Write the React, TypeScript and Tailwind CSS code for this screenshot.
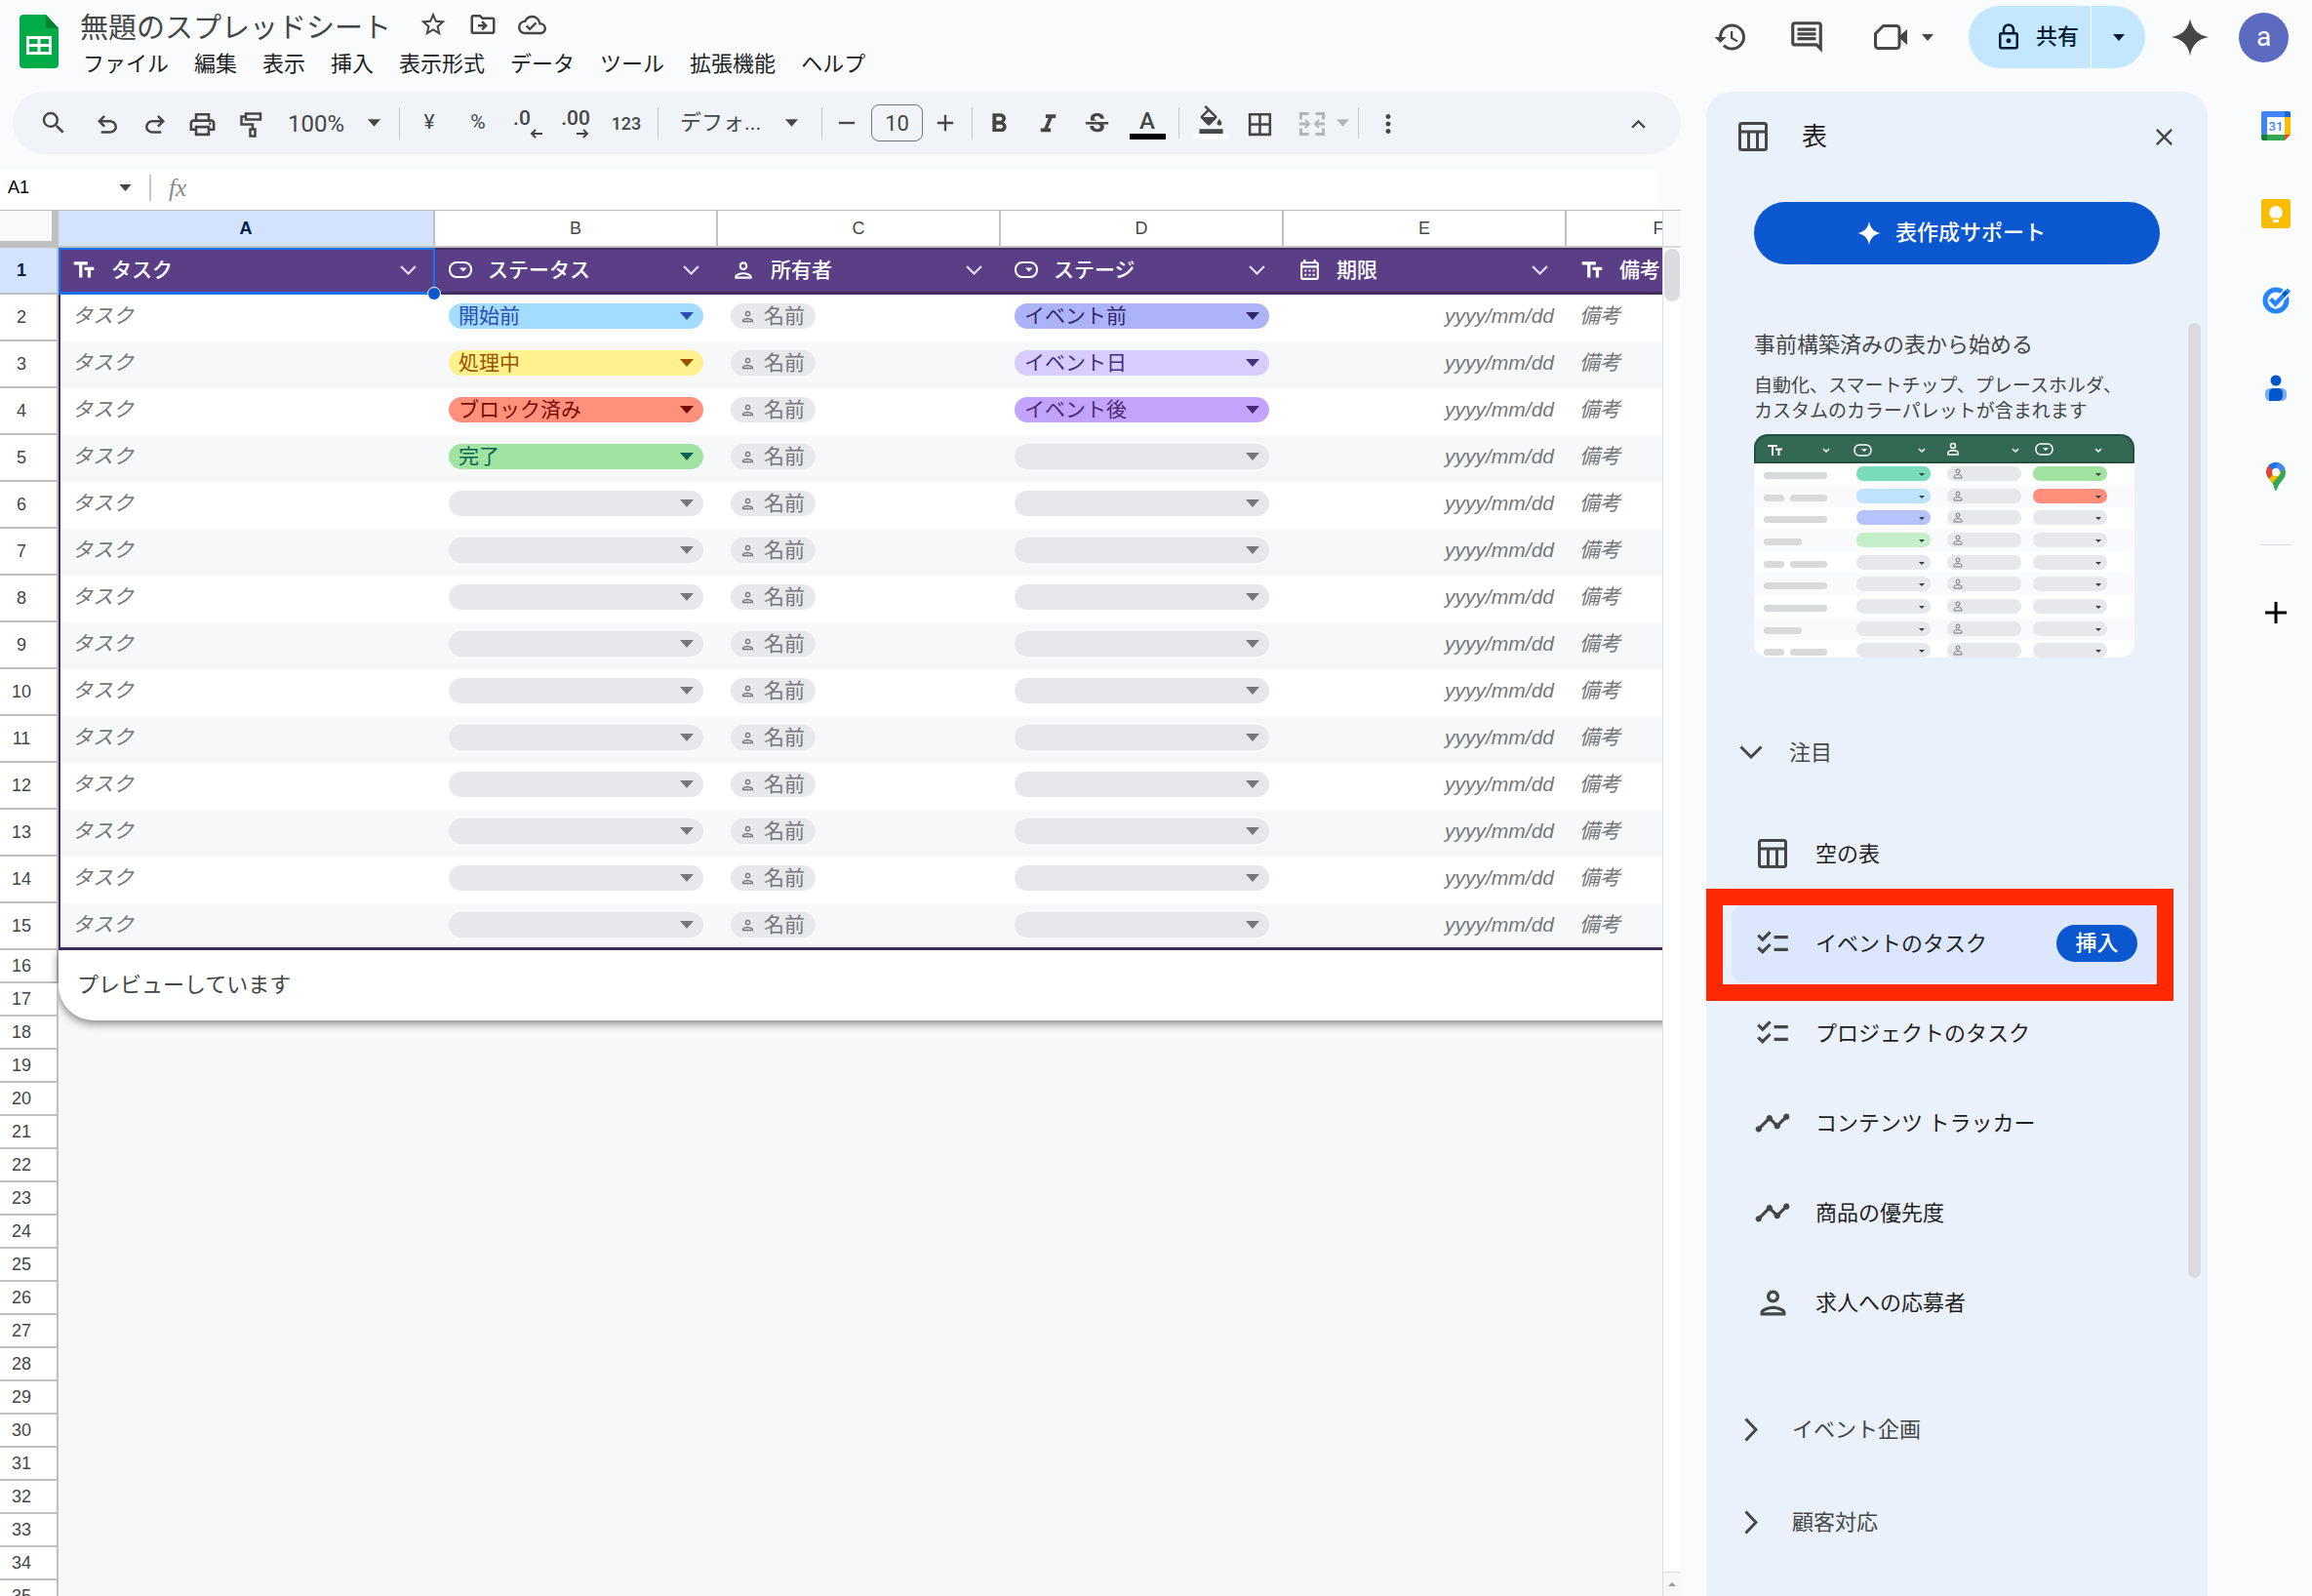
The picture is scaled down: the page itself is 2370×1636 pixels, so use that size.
import React from 'react';
import {
  MdAdd,
  MdBorderAll,
  MdChecklist,
  MdClose,
  MdExpandLess,
  MdFormatBold,
  MdFormatColorFill,
  MdFormatItalic,
  MdHistory,
  MdMoreVert,
  MdOutlineCalendarMonth,
  MdOutlineCloudDone,
  MdOutlineDriveFileMove,
  MdOutlineInsertComment,
  MdOutlineLock,
  MdOutlinePerson,
  MdOutlinePrint,
  MdRemove,
  MdSearch,
  MdStarBorder,
  MdStrikethroughS,
  MdTextFields,
  MdTimeline,
} from 'react-icons/md';

const MENUS = ['ファイル', '編集', '表示', '挿入', '表示形式', 'データ', 'ツール', '拡張機能', 'ヘルプ'];

const COLUMNS = [
  { letter: 'A', label: 'タスク', icon: 'text' },
  { letter: 'B', label: 'ステータス', icon: 'chip' },
  { letter: 'C', label: '所有者', icon: 'person' },
  { letter: 'D', label: 'ステージ', icon: 'chip' },
  { letter: 'E', label: '期限', icon: 'date' },
  { letter: 'F', label: '備考', icon: 'text' },
];

type ChipData = { label: string; tone: string };

const EMPTY_CHIP: ChipData = { label: '', tone: 'bg-[#e7e8eb] text-[#75777a]' };

const STATUS: ChipData[] = [
  { label: '開始前', tone: 'bg-[#a4dcff] text-[#2a4db0]' },
  { label: '処理中', tone: 'bg-[#fff18e] text-[#9a5400]' },
  { label: 'ブロック済み', tone: 'bg-[#ff917c] text-[#760b06]' },
  { label: '完了', tone: 'bg-[#a1e3a0] text-[#0f6350]' },
];

const STAGE: ChipData[] = [
  { label: 'イベント前', tone: 'bg-[#adb3f9] text-[#33286b]' },
  { label: 'イベント日', tone: 'bg-[#d9cdff] text-[#43307a]' },
  { label: 'イベント後', tone: 'bg-[#c3a4fc] text-[#4a2a72]' },
];

const BODY_ROWS = Array.from({ length: 14 }, (_, i) => i + 2);
const REST_ROWS = Array.from({ length: 20 }, (_, i) => i + 16);

const TEMPLATES = [
  { label: '空の表', icon: 'table' },
  { label: 'イベントのタスク', icon: 'check', active: true },
  { label: 'プロジェクトのタスク', icon: 'check' },
  { label: 'コンテンツ トラッカー', icon: 'line' },
  { label: '商品の優先度', icon: 'line' },
  { label: '求人への応募者', icon: 'person' },
];

function Caret({ className = '' }: { className?: string }) {
  return (
    <svg viewBox="0 0 14 8" className={`shrink-0 ${className}`} fill="currentColor" aria-hidden="true">
      <path d="M0 0h14L7 8z" />
    </svg>
  );
}

function Chevron({ className = '' }: { className?: string }) {
  return (
    <svg viewBox="0 0 24 14" className={className} fill="none" stroke="currentColor" strokeWidth="3" aria-hidden="true">
      <path d="M1.500 1.500 12 12 22.500 1.500" />
    </svg>
  );
}

function ChevronRight() {
  return (
    <svg viewBox="0 0 14 25" className="h-[25px] w-[14px]" fill="none" stroke="currentColor" strokeWidth="3" aria-hidden="true">
      <path d="M1.500 1.500 12 12.500 1.500 23.500" />
    </svg>
  );
}

function Sparkle({ className = '' }: { className?: string }) {
  return (
    <svg viewBox="0 0 38 38" className={className} fill="currentColor" aria-hidden="true">
      <path d="M19 0c2 11 8 17 19 19-11 2-17 8-19 19-2-11-8-17-19-19C11 17 17 11 19 0z" />
    </svg>
  );
}

function TableIcon() {
  return (
    <svg viewBox="0 0 30 30" className="h-[30px] w-[30px]" fill="none" stroke="currentColor" strokeWidth="3" aria-hidden="true">
      <rect x="1.500" y="1.500" width="27" height="27" rx="2" />
      <path d="M1.500 10h27M10.500 10v18.500M19.500 10v18.500" />
    </svg>
  );
}

function ChipIcon({ className = '' }: { className?: string }) {
  return (
    <svg viewBox="0 0 24 17" className={className} fill="none" aria-hidden="true">
      <rect x="1" y="1" width="22" height="15" rx="7" stroke="currentColor" strokeWidth="2" />
      <path d="M11 6.500h7.500L14.800 10.500z" fill="currentColor" />
    </svg>
  );
}

function ColumnIcon({ icon }: { icon: string }) {
  if (icon === 'text') return <MdTextFields className="h-[26px] w-[26px]" />;
  if (icon === 'chip') return <ChipIcon className="h-[17px] w-[24px]" />;
  if (icon === 'person') return <MdOutlinePerson className="h-[26px] w-[26px]" />;
  return <MdOutlineCalendarMonth className="h-[25px] w-[25px]" />;
}

function Header() {
  return (
    <header className="flex h-[94px] shrink-0 justify-between pl-5">
      <div className="flex">
        <svg viewBox="0 0 40 55" className="mt-[15px] h-[55px] w-[40px]" aria-hidden="true">
          <path d="M4 0h23l13 14v37a4 4 0 0 1-4 4H4a4 4 0 0 1-4-4V4a4 4 0 0 1 4-4z" fill="#00ac47" />
          <path d="M27 0l13 14H27z" fill="#00832d" />
          <path d="M7 22h26v19H7zM10 25v5h8.500v-5zM21.500 25v5H30v-5zM10 33v5h8.500v-5zM21.500 33v5H30v-5z" fill="#fff" fillRule="evenodd" />
        </svg>
        <div className="ml-[22px] pt-2">
          <div className="flex h-[34px] items-center text-[#444746]">
            <input
              aria-label="名前の変更"
              defaultValue="無題のスプレッドシート"
              className="h-[34px] w-[336px] bg-transparent pt-[2px] text-[29px] leading-[32px] text-[#444746]"
            />
            <button aria-label="スター" className="flex w-[51px] justify-center">
              <MdStarBorder className="h-[30px] w-[30px]" />
            </button>
            <button aria-label="移動" className="flex w-[51px] justify-center">
              <MdOutlineDriveFileMove className="h-[30px] w-[30px]" />
            </button>
            <button aria-label="ドキュメントのステータス" className="flex w-[51px] justify-center">
              <MdOutlineCloudDone className="h-[29px] w-[29px]" />
            </button>
          </div>
          <nav className="mt-[9px] flex h-[30px] items-center gap-[26px] pl-[3px] text-[22px] leading-[30px] text-[#1f1f1f]">
            {MENUS.map((menu) => (
              <button key={menu} className="whitespace-nowrap">
                {menu}
              </button>
            ))}
          </nav>
        </div>
      </div>

      <div className="flex h-[76px] items-center pr-6 text-[#444746]">
        <button aria-label="変更履歴">
          <MdHistory className="h-[36px] w-[36px]" />
        </button>
        <button aria-label="コメント" className="ml-[41px]">
          <MdOutlineInsertComment className="h-[38px] w-[38px]" />
        </button>
        <button aria-label="ビデオ通話" className="ml-[50px] flex items-center gap-[15px]">
          <svg viewBox="0 0 34 26" className="h-[26px] w-[34px]" aria-hidden="true">
            <path d="M9.500 1.500H23a3 3 0 0 1 3 3v17a3 3 0 0 1-3 3H4.500a3 3 0 0 1-3-3v-12z" fill="none" stroke="currentColor" strokeWidth="3" strokeLinejoin="round" />
            <path d="M26 12l8-7v16l-8-7z" fill="currentColor" />
          </svg>
          <Caret className="h-[7px] w-[12px]" />
        </button>
        <div className="ml-[36px] flex h-16 overflow-hidden rounded-full bg-[#c2e7ff] text-[#001d35]">
          <button className="flex w-[126px] items-center gap-[13px] border-r border-white pl-[26px] text-[22px] leading-[30px] font-medium">
            <MdOutlineLock className="h-[30px] w-[30px]" />
            共有
          </button>
          <button aria-label="共有オプション" className="flex w-[55px] items-center justify-center">
            <Caret className="h-[7px] w-[12px]" />
          </button>
        </div>
        <button aria-label="Gemini" className="ml-[27px]">
          <Sparkle className="h-[38px] w-[38px]" />
        </button>
        <button className="ml-[31px] flex h-[51px] w-[51px] items-center justify-center rounded-full bg-[#5c6bc0] text-[28px] leading-[30px] text-white">
          a
        </button>
      </div>
    </header>
  );
}

function ToolButton({ label, className = 'w-[50px]', children }: { label: string; className?: string; children: React.ReactNode }) {
  return (
    <button aria-label={label} className={`flex h-12 shrink-0 items-center justify-center ${className}`}>
      {children}
    </button>
  );
}

function Divider({ className = '' }: { className?: string }) {
  return <span className={`h-8 w-px shrink-0 bg-[#c7c7c7] ${className}`} />;
}

function Toolbar() {
  return (
    <div className="ml-[13px] flex h-16 shrink-0 items-center rounded-full bg-[#f0f4f9] pr-[19px] pl-[18px] text-[#444746]">
      <ToolButton label="検索" className="w-[48px]">
        <MdSearch className="h-[30px] w-[30px]" />
      </ToolButton>
      <ToolButton label="元に戻す" className="ml-[6px] w-[49px] pt-[3px]">
        <svg viewBox="0 -960 960 960" className="h-[30px] w-[30px]" fill="currentColor" aria-hidden="true">
          <path d="M280-200v-80h284q63 0 109.500-40T720-420q0-60-46.500-100T564-560H312l104 104-56 56-200-200 200-200 56 56-104 104h252q97 0 166.500 63T800-420q0 94-69.500 157T564-200H280Z" />
        </svg>
      </ToolButton>
      <ToolButton label="やり直し" className="w-[49px] pt-[3px]">
        <svg viewBox="0 -960 960 960" className="h-[30px] w-[30px]" fill="currentColor" aria-hidden="true">
          <path d="M396-200q-97 0-166.500-63T160-420q0-94 69.500-157T396-640h252L544-744l56-56 200 200-200 200-56-56 104-104H396q-63 0-109.500 40T240-420q0 60 46.500 100T396-280h284v80H396Z" />
        </svg>
      </ToolButton>
      <ToolButton label="印刷" className="w-[49px] pt-[3px]">
        <MdOutlinePrint className="h-[31px] w-[31px]" />
      </ToolButton>
      <ToolButton label="書式を貼り付け" className="w-[49px] pt-[3px]">
        <svg viewBox="0 0 24 28" className="h-[28px] w-[24px]" fill="none" stroke="currentColor" strokeWidth="2.500" aria-hidden="true">
          <path d="M7 2.500h15v6H7zM7 5.500H2.500v8H14v5M11.500 18.500h5v7h-5z" />
        </svg>
      </ToolButton>
      <label className="relative ml-[14px] flex w-[102px] shrink-0 items-center">
        <select aria-label="ズーム" className="w-full appearance-none bg-transparent pt-[2px] text-[24px] leading-[30px]">
          <option>100%</option>
        </select>
        <Caret className="absolute right-[7px] h-[8px] w-[13px]" />
      </label>
      <Divider className="ml-[12px]" />
      <ToolButton label="通貨の表示形式" className="ml-[5px] w-[50px] text-[21px]">¥</ToolButton>
      <ToolButton label="パーセント表示形式" className="w-[50px] text-[21px]">%</ToolButton>
      <ToolButton label="小数点以下の桁数を減らす" className="relative w-[50px] text-[21px] font-medium">
        <span className="pr-[10px] pb-[9px]">.0</span>
        <svg viewBox="0 0 13 10" className="absolute right-[9px] bottom-[8px] h-[10px] w-[13px]" fill="none" stroke="currentColor" strokeWidth="2" aria-hidden="true">
          <path d="M13 5H2M6 1 2 5l4 4" />
        </svg>
      </ToolButton>
      <ToolButton label="小数点以下の桁数を増やす" className="relative w-[50px] text-[21px] font-medium">
        <span className="pb-[9px]">.00</span>
        <svg viewBox="0 0 13 10" className="absolute right-[11px] bottom-[8px] h-[10px] w-[13px]" fill="none" stroke="currentColor" strokeWidth="2" aria-hidden="true">
          <path d="M0 5h11M7 1l4 4-4 4" />
        </svg>
      </ToolButton>
      <ToolButton label="表示形式の詳細設定" className="w-[54px] text-[18px] font-medium">123</ToolButton>
      <Divider className="ml-[5px]" />
      <label className="relative ml-[22px] flex w-[129px] shrink-0 items-center">
        <select aria-label="フォント" className="w-full appearance-none bg-transparent text-[22px] leading-[30px]">
          <option>デフォ...</option>
        </select>
        <Caret className="absolute right-[8px] h-[8px] w-[13px]" />
      </label>
      <Divider className="ml-[16px]" />
      <ToolButton label="フォントサイズを縮小">
        <MdRemove className="h-[28px] w-[28px]" />
      </ToolButton>
      <input
        aria-label="フォントサイズ"
        defaultValue="10"
        className="h-[38px] w-[53px] shrink-0 rounded-lg border border-[#747775] bg-transparent text-center text-[22px]"
      />
      <ToolButton label="フォントサイズを拡大" className="w-[46px]">
        <MdAdd className="h-[28px] w-[28px]" />
      </ToolButton>
      <Divider className="ml-[4px]" />
      <ToolButton label="太字" className="ml-[2px] w-[50px] pt-[2px]">
        <MdFormatBold className="h-[32px] w-[32px]" />
      </ToolButton>
      <ToolButton label="斜体" className="w-[50px] pt-[2px]">
        <MdFormatItalic className="h-[31px] w-[31px]" />
      </ToolButton>
      <ToolButton label="取り消し線" className="w-[50px] pt-[2px]">
        <MdStrikethroughS className="h-[31px] w-[31px]" />
      </ToolButton>
      <ToolButton label="テキストの色" className="w-[54px] flex-col pt-px">
        <span className="text-[24px] leading-[26px] font-medium">A</span>
        <span className="h-[6px] w-[37px] bg-black" />
      </ToolButton>
      <Divider className="ml-[5px]" />
      <ToolButton label="塗りつぶしの色" className="ml-[7px] w-[50px] flex-col pb-px">
        <MdFormatColorFill className="h-[29px] w-[29px]" />
        <span className="h-[6px] w-[37px] bg-white" />
      </ToolButton>
      <ToolButton label="枠線" className="w-[50px] pt-[2px]">
        <MdBorderAll className="h-[31px] w-[31px]" />
      </ToolButton>
      <ToolButton label="セルを結合" className="ml-[4px] w-[50px] pt-[2px] text-[#b3b6b9]">
        <svg viewBox="0 0 26 24" className="h-[24px] w-[26px]" fill="none" stroke="currentColor" strokeWidth="3" aria-hidden="true">
          <path d="M9.500 1.500h-8v6M1.500 16.500v6h8M16.500 1.500h8v6M24.500 16.500v6h-8M0 12h9M26 12h-9" />
          <path d="M6 8l4 4-4 4M20 8l-4 4 4 4" strokeWidth="2" />
        </svg>
      </ToolButton>
      <Caret className="h-[8px] w-[13px] text-[#b3b6b9]" />
      <Divider className="ml-[9px]" />
      <ToolButton label="その他" className="ml-[5px] w-[50px] pt-[2px]">
        <MdMoreVert className="h-[30px] w-[30px]" />
      </ToolButton>
      <ToolButton label="メニューを非表示" className="ml-auto w-[50px] pt-[2px]">
        <MdExpandLess className="h-[29px] w-[29px]" />
      </ToolButton>
    </div>
  );
}

function FormulaBar() {
  return (
    <div className="mt-[15px] mr-[25px] flex h-[42px] shrink-0 items-center bg-white pb-[3px] pl-[8px] text-[#444746]">
      <input aria-label="名前ボックス" defaultValue="A1" className="w-[114px] bg-transparent font-['Liberation_Sans',sans-serif] text-[18px] text-black" />
      <Caret className="h-[7px] w-[13px]" />
      <span className="ml-[18px] h-[27px] w-[2px] bg-[#c7c7c7]" />
      <span className="ml-[18px] font-['Liberation_Serif',serif] text-[25px] leading-[28px] text-[#85888b] italic">fx</span>
    </div>
  );
}

function SelectChip({ name, chip }: { name: string; chip: ChipData }) {
  return (
    <label className={`relative mr-[15px] ml-[14px] flex h-[26px] items-center rounded-full ${chip.tone}`}>
      <select aria-label={name} className="h-[26px] w-full appearance-none bg-transparent pl-[10px] text-[21px] leading-[26px]">
        <option>{chip.label}</option>
      </select>
      <Caret className="absolute right-[10px] h-[8px] w-[14px]" />
    </label>
  );
}

function Sheet() {
  return (
    <div className="flex min-h-0 flex-1 border-t border-[#c0c0c0] bg-[#f8f8f8]">
      <div className="min-w-0 flex-1 overflow-hidden">
        <table className="w-[1796px] table-fixed border-separate border-spacing-0 font-['Liberation_Sans','Noto_Sans_CJK_JP',sans-serif] text-[21px] leading-[26px] text-[#757779]">
          <colgroup>
            <col className="w-[60px]" />
            <col className="w-[386px]" />
            <col className="w-[290px]" />
            <col className="w-[290px]" />
            <col className="w-[290px]" />
            <col className="w-[290px]" />
            <col className="w-[190px]" />
          </colgroup>
          <thead>
            <tr className="h-[38px] text-[18px]">
              <td className="border-r-[7px] border-b-[7px] border-[#c0c0c0] bg-[#f8f9fa] p-0" />
              {COLUMNS.map(({ letter }) => (
                <th
                  key={letter}
                  className={
                    letter === 'A'
                      ? 'border-r-2 border-b-2 border-[#c0c0c0] bg-[#d3e3fd] p-0 font-bold text-[#041e49]'
                      : 'border-r-2 border-b-2 border-[#c0c0c0] bg-white p-0 font-normal text-[#444746]'
                  }
                >
                  {letter}
                </th>
              ))}
            </tr>
          </thead>
          <tbody>
            <tr className="h-12">
              <RowHeader n={1} />
              {COLUMNS.map(({ letter, label, icon }) => (
                <th key={letter} className="relative border-t-2 border-b-[3px] border-[#43305f] bg-[#5b3f86] p-0 pb-[2px] text-left font-medium text-white">
                  <div className="flex items-center pr-[19px] pl-[13px]">
                    <span className="flex w-[26px] justify-center">
                      <ColumnIcon icon={icon} />
                    </span>
                    <span className="ml-[15px] whitespace-nowrap">{label}</span>
                    {letter !== 'F' && (
                      <button aria-label={`${label}の列メニュー`} className="ml-auto">
                        <Chevron className="h-[10px] w-[17px] text-[#e9dcff]" />
                      </button>
                    )}
                  </div>
                  {letter === 'A' && (
                    <>
                      <span className="absolute inset-x-0 -top-[2px] -bottom-[3px] border-2 border-b-[3px] border-[#1a73e8]" />
                      <span className="absolute -right-[6px] -bottom-[9px] z-10 h-[14px] w-[14px] rounded-full border border-white bg-[#0b57d0]" />
                    </>
                  )}
                </th>
              ))}
            </tr>
            {BODY_ROWS.map((n) => (
              <BodyRow key={n} n={n} />
            ))}
            {REST_ROWS.map((n) => (
              <tr key={n} className="h-[34px]">
                <RowHeader n={n} />
                {n === 16 && (
                  <td colSpan={6} rowSpan={20} className="bg-[#f8f8f8] p-0 align-top">
                    <div className="flex h-[72px] items-center rounded-bl-[36px] bg-white pl-[19px] text-[22px] text-[#444746] shadow-[0_3px_10px_rgba(0,0,0,0.5)]">
                      プレビューしています
                    </div>
                  </td>
                )}
              </tr>
            ))}
          </tbody>
        </table>
      </div>
      <div className="flex w-[19px] shrink-0 flex-col border-l border-[#dcdcdc] bg-white">
        <div className="h-[38px] border-b-2 border-[#dcdcdc] bg-[#f8f9fa]" />
        <div className="mt-px ml-px h-[54px] w-4 rounded-full bg-[#dadce0]" />
        <button aria-label="上へスクロール" className="mt-auto flex h-[25px] items-center justify-center border-t border-[#dcdcdc] bg-[#f8f8f8]">
          <svg viewBox="0 0 8 4" className="h-[4px] w-[8px]" fill="#9a9a9a" aria-hidden="true">
            <path d="M0 4h8L4 0z" />
          </svg>
        </button>
      </div>
    </div>
  );
}

function RowHeader({ n }: { n: number }) {
  return (
    <th
      className={
        n === 1
          ? 'border-r-2 border-b-2 border-[#c0c0c0] bg-[#d3e3fd] p-0 pr-[14px] text-[18px] leading-[20px] font-bold text-[#041e49]'
          : 'border-r-2 border-b-2 border-[#c0c0c0] bg-white p-0 pr-[14px] text-[18px] leading-[20px] font-normal text-[#444746]'
      }
    >
      {n}
    </th>
  );
}

function BodyRow({ n }: { n: number }) {
  const last = n === 15;
  const cell = last ? 'border-b-[3px] border-[#43305f] p-0 pb-px' : 'p-0 pb-[4px]';
  return (
    <tr className={n % 2 ? 'h-12 bg-[#f6f8f9]' : 'h-12 bg-white'}>
      <RowHeader n={n} />
      <td className={`${cell} border-l-2 border-l-[#43305f]`}>
        <span className="pl-[12px] italic">タスク</span>
      </td>
      <td className={cell}>
        <SelectChip name="ステータス" chip={STATUS[n - 2] ?? EMPTY_CHIP} />
      </td>
      <td className={cell}>
        <span className="ml-[13px] flex h-[26px] w-[87px] items-center gap-[8px] rounded-full bg-[#e7e8eb] pl-[9px] whitespace-nowrap">
          <MdOutlinePerson className="h-[17px] w-[17px]" />
          名前
        </span>
      </td>
      <td className={cell}>
        <SelectChip name="ステージ" chip={STAGE[n - 2] ?? EMPTY_CHIP} />
      </td>
      <td className={`${cell} text-right italic`}>
        <span className="pr-[13px]">yyyy/mm/dd</span>
      </td>
      <td className={`${cell} italic`}>
        <span className="pl-[13px]">備考</span>
      </td>
    </tr>
  );
}

/* Illustration of a prebuilt table */
const ART_STATUS = ['#78dcba', '#bde3fd', '#b6c3fd', '#c4efca'];
const ART_STAGE = ['#a0e29f', '#ff8f7b'];
const ART_LINES = ['long', 'split', 'long', 'short', 'split', 'long', 'long', 'short', 'split'];

function TableArt() {
  return (
    <svg viewBox="0 0 390 229" className="mt-[10px] h-[229px] w-[390px] rounded-[14px]" aria-hidden="true">
      <rect width="390" height="229" fill="#fff" />
      <rect width="390" height="30" fill="#24503c" />
      <path d="M2 28V14A12 12 0 0 1 14 2h362a12 12 0 0 1 12 12v14z" fill="#336852" />
      <g fill="none" stroke="#fff" strokeWidth="1.500">
        <path d="M14 12h10M19 12v10M22 15.500h7M25.500 15.500v6.500" strokeWidth="2" />
        {[74, 172, 268, 353].map((x) => (
          <path key={x} d={`M${x - 3} 15l3 3 3-3`} />
        ))}
        <rect x="103" y="11" width="17" height="11" rx="5" />
        <rect x="289" y="10" width="17" height="11" rx="5" />
        <circle cx="204" cy="12" r="2.500" />
        <path d="M199 21v-2c0-3 10-3 10 0v2z" />
      </g>
      <path d="M110 15h6l-3 3zM296 14h6l-3 3z" fill="#fff" />
      {ART_LINES.map((kind, i) => {
        const y = Math.round(33 + i * 22.65);
        return (
          <g key={i}>
            {i % 2 === 1 && <rect x="0" y={y - 4} width="390" height="23" fill="#f9fafb" />}
            <g fill="#d9dadc">
              {kind === 'long' && <rect x="10" y={y + 6} width="65" height="7" rx="3" />}
              {kind === 'short' && <rect x="10" y={y + 6} width="39" height="7" rx="3" />}
              {kind === 'split' && <rect x="10" y={y + 6} width="21" height="7" rx="3" />}
              {kind === 'split' && <rect x="37" y={y + 6} width="38" height="7" rx="3" />}
            </g>
            <rect x="105" y={y} width="76" height="15" rx="7" fill={ART_STATUS[i] ?? '#e7e8eb'} />
            <rect x="198" y={y} width="76" height="15" rx="7" fill="#e7e8eb" />
            <rect x="286" y={y} width="76" height="15" rx="7" fill={ART_STAGE[i] ?? '#e7e8eb'} />
            <path d={`M169 ${y + 7}h6l-3 3zM350 ${y + 7}h6l-3 3z`} fill="#3c4043" />
            <g fill="none" stroke="#75777a">
              <circle cx="209" cy={y + 5} r="2" />
              <path d={`M205 ${y + 12}v-1.500c0-2.500 8-2.500 8 0v1.500z`} />
            </g>
          </g>
        );
      })}
    </svg>
  );
}

function TemplateIcon({ icon }: { icon: string }) {
  if (icon === 'table') return <TableIcon />;
  if (icon === 'check') return <MdChecklist className="h-[38px] w-[38px] shrink-0" />;
  if (icon === 'line') return <MdTimeline className="h-[38px] w-[38px] shrink-0" />;
  return <MdOutlinePerson className="h-[39px] w-[39px] shrink-0" />;
}

function SidePanel() {
  return (
    <aside className="ml-[26px] flex w-[514px] shrink-0 flex-col rounded-t-[26px] bg-[#ebf1fa] text-[22px] leading-[30px] text-[#444746]">
      <div className="flex h-[92px] shrink-0 items-center pr-[30px] pl-[33px]">
        <TableIcon />
        <h2 className="ml-[35px] text-[26px] text-[#1f1f1f]">表</h2>
        <button aria-label="閉じる" className="ml-auto pt-px">
          <MdClose className="h-[29px] w-[29px]" />
        </button>
      </div>
      <button className="mt-[21px] mr-[49px] ml-[49px] flex h-16 shrink-0 items-center justify-center gap-[15px] rounded-full bg-[#0b57d0] pr-[11px] font-medium text-white">
        <Sparkle className="h-[24px] w-[24px]" />
        表作成サポート
      </button>
      <div className="mt-[60px] flex min-h-0 flex-1">
        <div className="min-w-0 flex-1 overflow-hidden">
          <div className="pl-[49px]">
            <h3 className="pt-[2px] leading-[42px]">事前構築済みの表から始める</h3>
            <p className="mt-[8px] text-[19px] leading-[26px] whitespace-nowrap">
              自動化、スマートチップ、プレースホルダ、
              <br />
              カスタムのカラーパレットが含まれます
            </p>
            <TableArt />
          </div>
          <button className="mt-[73px] flex h-12 items-center gap-[23px] pl-[30px]">
            <span className="flex w-8 justify-center">
              <Chevron className="h-[14px] w-[24px]" />
            </span>
            <span className="pt-[2px]">注目</span>
          </button>
          <ul className="mt-[34px] text-[#1f1f1f]">
            {TEMPLATES.map(({ label, icon, active }) => (
              <li key={label} className="relative flex h-[92px] items-center pr-[28px] pl-[26px]">
                <div className={`flex h-[79px] flex-1 items-center rounded-xl pr-[24px] pl-[26px] ${active ? 'bg-[#dce7fd]' : ''}`}>
                  <span className="flex w-8 justify-center text-[#444746]">
                    <TemplateIcon icon={icon} />
                  </span>
                  <span className="ml-[28px] pt-px">{label}</span>
                  {active && (
                    <button className="ml-auto h-[38px] w-[83px] rounded-full bg-[#0b57d0] font-medium text-white">挿入</button>
                  )}
                </div>
                {active && (
                  <span className="pointer-events-none absolute -top-[10px] left-0 h-[115px] w-[479px] border-[17px] border-[#ff2900]" />
                )}
              </li>
            ))}
          </ul>
          <div className="mt-[37px]">
            {['イベント企画', '顧客対応'].map((label) => (
              <button key={label} className="flex h-[95px] items-center gap-[26px] pl-[30px]">
                <span className="flex w-8 justify-center">
                  <ChevronRight />
                </span>
                {label}
              </button>
            ))}
          </div>
        </div>
        <div className="mr-[7px] h-3/4 w-[13px] shrink-0 rounded-full bg-[#d9dbdf]" />
      </div>
    </aside>
  );
}

function AppRail() {
  return (
    <nav className="flex w-[107px] shrink-0 flex-col items-center gap-[60px] pt-5 pl-[33px]">
      <button aria-label="カレンダー">
        <svg viewBox="0 0 30 30" className="h-[30px] w-[30px]">
          <path d="M2 0h22v6H6v18H0V2a2 2 0 0 1 2-2z" fill="#4285f4" />
          <path d="M24 0h4a2 2 0 0 1 2 2v4h-6z" fill="#1967d2" />
          <path d="M24 6h6v18h-6z" fill="#fbbc04" />
          <path d="M6 24h18v6H6z" fill="#34a853" />
          <path d="M0 24h6v6H2a2 2 0 0 1-2-2z" fill="#188038" />
          <path d="M24 24h6l-6 6z" fill="#ea4335" />
          <path d="M6 6h18v18H6z" fill="#fff" />
          <text x="15" y="20" textAnchor="middle" fontSize="13" fontFamily="Roboto" fontWeight="500" fill="#4285f4">
            31
          </text>
        </svg>
      </button>
      <button aria-label="Keep">
        <svg viewBox="0 0 30 30" className="h-[30px] w-[30px]">
          <rect width="30" height="30" rx="3" fill="#fbbc04" />
          <path d="M15 7a7 7 0 0 1 4 12.500H11A7 7 0 0 1 15 7zM12 21h6v3h-6z" fill="#fff" />
        </svg>
      </button>
      <button aria-label="ToDo リスト">
        <svg viewBox="0 1 30 30" className="h-[30px] w-[30px]" fill="none">
          <circle cx="15" cy="15" r="11" stroke="#2684fc" strokeWidth="5" />
          <path d="M9.500 13.500l5 5L27.500 5" stroke="#fff" strokeWidth="8" />
          <path d="M9.500 13.500l5 5L28.500 4" stroke="#2684fc" strokeWidth="4.500" />
          <path d="M21 8l3.500-3.500 3 3-3.500 3.500z" fill="#0057cc" />
        </svg>
      </button>
      <button aria-label="連絡先">
        <svg viewBox="0 1 30 30" className="h-[30px] w-[30px]">
          <circle cx="15" cy="7" r="5.500" fill="#0057cc" />
          <rect x="4" y="15" width="22" height="13" rx="5" fill="#7baaf7" />
          <path d="M13 15h4a5 5 0 0 1 5 5v3a5 5 0 0 1-5 5H8v-8a5 5 0 0 1 5-5z" fill="#0057cc" />
        </svg>
      </button>
      <button aria-label="マップ">
        <svg viewBox="0 1 20 30" className="h-[30px] w-[20px]">
          <defs>
            <clipPath id="pin">
              <path d="M10 1a10 10 0 0 1 10 10c0 6-4 8-6.500 12.500C11.500 26 11.500 30 10 30s-1.500-4-3.500-7.500C4 18 0 16 0 10A10 10 0 0 1 10 1z" />
            </clipPath>
          </defs>
          <g clipPath="url(#pin)">
            <path d="M0 0h20v30H0z" fill="#34a853" />
            <path d="M0 0h8l2 10-8 8-2-4z" fill="#ea4335" />
            <path d="M2 3 8 0h12v6l-7 7-6-4z" fill="#4285f4" />
            <path d="M2 3 8 0h6L7 9z" fill="#1a73e8" />
            <path d="M10 10 2 19l4 4 10-12z" fill="#fbbc04" />
          </g>
          <circle cx="10" cy="11" r="4" fill="#fff" />
        </svg>
      </button>
      <div className="-mt-[6px] flex flex-col items-center">
        <span className="h-px w-8 bg-[#dadce0]" />
        <button aria-label="アドオンを取得" className="mt-[54px] text-black">
          <svg viewBox="0 0 22 22" className="h-[30px] w-[22px]" stroke="currentColor" strokeWidth="3" aria-hidden="true">
            <path d="M0 11h22M11 0v22" />
          </svg>
        </button>
      </div>
    </nav>
  );
}

export default function App() {
  return (
    <div lang="ja" className="flex h-screen flex-col overflow-hidden bg-[#f9fbfd] font-['Roboto','Noto_Sans_CJK_JP',sans-serif]">
      <Header />
      <div className="flex min-h-0 flex-1">
        <main className="flex min-w-0 flex-1 flex-col">
          <Toolbar />
          <FormulaBar />
          <Sheet />
        </main>
        <SidePanel />
        <AppRail />
      </div>
    </div>
  );
}
